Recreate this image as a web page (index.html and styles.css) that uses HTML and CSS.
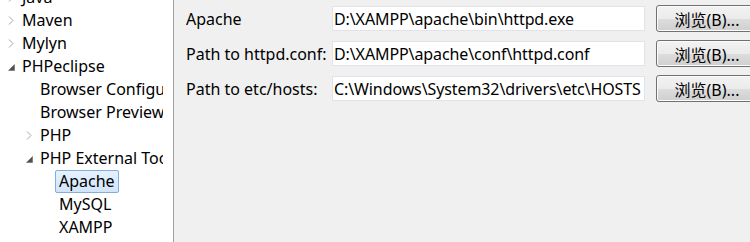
FILE: index.html
```html
<!DOCTYPE html>
<html lang="zh-CN">
<head>
  <meta charset="utf-8">
  <title>Preferences — PHP External Tools — Apache</title>
  <link rel="stylesheet" href="styles.css">
</head>
<body>
  <div class="prefs">
    <div class="tree">
      <ul class="tree__list">
        <li class="tree__row tree__row--l1"><span class="tree__toggle"><svg class="tree__chevron" width="6" height="9" viewBox="0 0 6 9"><path d="M1 0.5 L5 4.5 L1 8.5" fill="none" stroke="#a6a6a6"/></svg></span><span class="tree__label">Java</span></li>
        <li class="tree__row tree__row--l1"><span class="tree__toggle"><svg class="tree__chevron" width="6" height="9" viewBox="0 0 6 9"><path d="M1 0.5 L5 4.5 L1 8.5" fill="none" stroke="#a6a6a6"/></svg></span><span class="tree__label">Maven</span></li>
        <li class="tree__row tree__row--l1"><span class="tree__toggle"><svg class="tree__chevron" width="6" height="9" viewBox="0 0 6 9"><path d="M1 0.5 L5 4.5 L1 8.5" fill="none" stroke="#a6a6a6"/></svg></span><span class="tree__label">Mylyn</span></li>
        <li class="tree__row tree__row--l1"><span class="tree__toggle"><svg class="tree__open" width="7" height="7" viewBox="0 0 7 7"><path d="M6.5 0.5 L6.5 6.5 L0.5 6.5 Z" fill="#505050" stroke="#6a6a6a" stroke-width="0.6"/></svg></span><span class="tree__label">PHPeclipse</span></li>
        <li class="tree__row tree__row--l2"><span class="tree__toggle"></span><span class="tree__label">Browser Configuration</span></li>
        <li class="tree__row tree__row--l2"><span class="tree__toggle"></span><span class="tree__label">Browser Preview Defaults</span></li>
        <li class="tree__row tree__row--l2"><span class="tree__toggle"><svg class="tree__chevron" width="6" height="9" viewBox="0 0 6 9"><path d="M1 0.5 L5 4.5 L1 8.5" fill="none" stroke="#a6a6a6"/></svg></span><span class="tree__label">PHP</span></li>
        <li class="tree__row tree__row--l2"><span class="tree__toggle"><svg class="tree__open" width="7" height="7" viewBox="0 0 7 7"><path d="M6.5 0.5 L6.5 6.5 L0.5 6.5 Z" fill="#505050" stroke="#6a6a6a" stroke-width="0.6"/></svg></span><span class="tree__label">PHP External Tools</span></li>
        <li class="tree__row tree__row--l3"><span class="tree__toggle"></span><span class="tree__label tree__label--selected">Apache</span></li>
        <li class="tree__row tree__row--l3"><span class="tree__toggle"></span><span class="tree__label">MySQL</span></li>
        <li class="tree__row tree__row--l3"><span class="tree__toggle"></span><span class="tree__label">XAMPP</span></li>
      </ul>
    </div>

    <div class="page">
      <form class="fields">
        <label class="fields__label" for="apache">Apache</label>
        <input class="fields__input" id="apache" type="text" value="D:\XAMPP\apache\bin\httpd.exe">
        <button class="fields__button" type="button">浏览(B)...</button>

        <label class="fields__label" for="conf">Path to httpd.conf:</label>
        <input class="fields__input" id="conf" type="text" value="D:\XAMPP\apache\conf\httpd.conf">
        <button class="fields__button" type="button">浏览(B)...</button>

        <label class="fields__label" for="hosts">Path to etc/hosts:</label>
        <input class="fields__input" id="hosts" type="text" value="C:\Windows\System32\drivers\etc\HOSTS">
        <button class="fields__button" type="button">浏览(B)...</button>
      </form>
    </div>
  </div>
</body>
</html>
```

FILE: styles.css
```css
*, *::before, *::after {
  margin: 0;
  padding: 0;
  box-sizing: border-box;
}

html, body {
  height: 100%;
}

body {
  font-family: "Noto Sans", "Noto Sans CJK SC", sans-serif;
  font-size: 16px;
  color: #000000;
  background-color: #f0f0f0;
  overflow: hidden;
}

.prefs {
  display: flex;
  height: 100%;
}

/* left tree */

.tree {
  flex: 0 0 174px;
  background-color: #ffffff;
  border-right: 1px solid #a0a0a0;
  overflow: hidden;
}

.tree__list {
  width: 163px;
  margin-top: -14px;
  list-style: none;
  overflow: hidden;
}

.tree__row {
  display: flex;
  align-items: center;
  height: 23px;
  white-space: nowrap;
}

.tree__row--l2 {
  padding-left: 18px;
}

.tree__row--l3 {
  padding-left: 37px;
}

.tree__toggle {
  display: flex;
  align-items: center;
  flex: 0 0 18px;
  height: 100%;
  padding-left: 8px;
}

.tree__open {
  margin-top: 1px;
}

.tree__label {
  height: 23px;
  padding: 0 3px;
  border: 1px solid transparent;
  border-radius: 2px;
  line-height: 21px;
}

.tree__label--selected {
  border-color: #84acdd;
  background: linear-gradient(#e6f1fd, #d2e5fb);
}

/* right page */

.page {
  flex: 1;
  padding: 5px 0 0 12px;
  overflow: hidden;
}

.fields {
  display: grid;
  grid-template-columns: 135px 313px 102px;
  grid-auto-rows: 27px;
  column-gap: 11px;
  row-gap: 8px;
  align-items: center;
}

.fields__label {
  white-space: nowrap;
}

.fields__input {
  height: 25px;
  padding: 0 1px;
  border: 1px solid #e2e3ea;
  background-color: #ffffff;
  font: inherit;
  letter-spacing: -0.1px;
  color: #000000;
  outline: none;
}

.fields__button {
  height: 27px;
  border: 1px solid #707070;
  border-radius: 3px;
  background: linear-gradient(#f2f2f2 0%, #ebebeb 50%, #dddddd 51%, #cfcfcf 100%);
  box-shadow: inset 0 0 0 1px #fcfcfc;
  font: inherit;
  color: #000000;
}
```
